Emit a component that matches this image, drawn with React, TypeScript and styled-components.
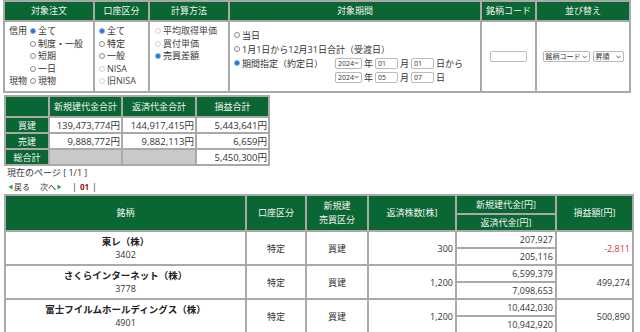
import React from "react";
import styled, { createGlobalStyle } from "styled-components";

const Global = createGlobalStyle`
  html, body { margin: 0; padding: 0; background: #fff; overflow: hidden; }
  body {
    font-family: "Open Sans", "Noto Sans CJK JP", sans-serif;
    font-size: 9px;
    color: #333;
  }
`;

const GREEN = "#0a6633";
const LINE = "#a9a9a9";

const Page = styled.div`
  display: flex;
  flex-direction: column;
  align-items: flex-start;
  padding-left: 3px;
  width: 640px;
  height: 332px;
  box-sizing: border-box;
`;

/* ---------- generic grid table ---------- */
const GridTable = styled.div<{ $cols: string; $rows: string; $shift?: number; $top?: number }>`
  display: grid;
  grid-template-columns: ${(p) => p.$cols};
  grid-template-rows: ${(p) => p.$rows};
  gap: 2px;
  border: 2px solid ${LINE};
  background: ${LINE};
  margin-left: ${(p) => p.$shift ?? 0}px;
  margin-top: ${(p) => p.$top ?? 0}px;
  flex: none;
`;

const HeadCell = styled.div<{ $span?: number }>`
  grid-row: span ${(p) => p.$span ?? 1};
  background: ${GREEN};
  color: #f2f2f2;
  display: flex;
  align-items: center;
  justify-content: center;
  text-align: center;
  font-size: 9px;
  line-height: 14px;
  white-space: nowrap;
`;

/* ---------- filter table ---------- */
const OptionCell = styled.div<{ $pad: number }>`
  background: #fff;
  padding: 3px 0 0 ${(p) => p.$pad}px;
  display: flex;
  flex-direction: column;
  line-height: 12.5px;
  white-space: nowrap;
`;

const CenterCell = styled.div`
  background: #fff;
  display: flex;
  align-items: center;
  justify-content: center;
  gap: 3px;
`;

const OrderGrid = styled.div`
  display: grid;
  grid-template-columns: 21px auto;
  grid-auto-rows: 12.5px;
  align-items: center;
`;

const PeriodCell = styled.div`
  background: #fff;
  padding-left: 4px;
  display: flex;
  flex-direction: column;
  justify-content: center;
  padding-bottom: 1px;
  white-space: nowrap;
`;

const PeriodRow = styled.div`
  height: 14px;
  display: flex;
  align-items: center;
`;

const RangeGrid = styled.div`
  display: grid;
  grid-template-columns: 101px auto;
  grid-auto-rows: 14px;
  align-items: center;
`;

const DateLine = styled.div`
  display: flex;
  align-items: center;
  gap: 1px;
`;

const Opt = styled.label<{ $disabled?: boolean }>`
  display: inline-flex;
  align-items: center;
  color: ${(p) => (p.$disabled ? "#444" : "#333")};
`;

const Radio = styled.span<{ $checked?: boolean; $disabled?: boolean }>`
  display: inline-block;
  flex: none;
  width: 6px;
  height: 6px;
  box-sizing: border-box;
  border-radius: 50%;
  margin-right: 2px;
  border: 1px solid
    ${(p) => (p.$checked ? "#7fb0ee" : p.$disabled ? "#d4d4d4" : "#8a8a8a")};
  background: ${(p) => (p.$checked ? "#1f74e0" : "#fff")};
`;

const FakeSelect = styled.span<{ $w: number }>`
  display: inline-flex;
  align-items: center;
  justify-content: space-between;
  width: ${(p) => p.$w}px;
  height: 11px;
  box-sizing: border-box;
  border: 1px solid #b8b8b8;
  border-radius: 2px;
  background: #fff;
  padding: 0 2px 0 2px;
  font-size: 7px;
  line-height: 9px;
  color: #333;
  flex: none;
`;

const TextBox = styled.input<{ $w: number }>`
  width: ${(p) => p.$w}px;
  height: 11px;
  box-sizing: border-box;
  border: 1px solid #bcbcbc;
  border-radius: 2px;
  padding: 0 2px;
  margin: 0;
  font-family: "Open Sans", sans-serif;
  font-size: 7px;
  color: #333;
  background: #fff;
  outline: none;
  flex: none;
`;

const Unit = styled.span`
  padding: 0 1px;
`;

const Chevron = () => (
  <svg width="5" height="4" viewBox="0 0 5 4">
    <path d="M0.6 1 L2.5 2.9 L4.4 1" fill="none" stroke="#444" strokeWidth="0.9" />
  </svg>
);

/* ---------- summary table ---------- */
const SideHead = styled.div`
  background: ${GREEN};
  color: #f2f2f2;
  display: flex;
  align-items: center;
  justify-content: center;
  font-size: 9px;
`;

const SumCell = styled.div<{ $blank?: boolean }>`
  background: ${(p) => (p.$blank ? "#c9c9c9" : "#fff")};
  display: flex;
  align-items: center;
  justify-content: flex-end;
  padding-right: 1px;
  font-size: 9.5px;
  white-space: nowrap;
`;

/* ---------- pager ---------- */
const Pager = styled.div`
  padding-left: 4px;
  height: 29px;
  display: flex;
  flex-direction: column;
  justify-content: center;
  line-height: 14px;
  font-size: 9px;
  color: #333;
`;

const NavRow = styled.div`
  display: flex;
  align-items: center;
  gap: 2px;
  padding-left: 1px;
`;

const NavLink = styled.span`
  display: inline-flex;
  align-items: center;
  gap: 1px;
  font-size: 8px;
  margin-right: 8px;
`;

const PageNo = styled.span`
  color: #8b1010;
  font-weight: bold;
  font-size: 8px;
  padding: 0 1px;
`;

const Tri = ({ dir }: { dir: "l" | "r" }) => (
  <svg width="5" height="6" viewBox="0 0 5 6">
    <path d={dir === "l" ? "M4.5 0.5 L0.5 3 L4.5 5.5Z" : "M0.5 0.5 L4.5 3 L0.5 5.5Z"} fill="#27a53a" />
  </svg>
);

/* ---------- result table ---------- */
const BodyCell = styled.div<{ $span?: number; $align?: string }>`
  grid-row: span ${(p) => p.$span ?? 1};
  background: #fff;
  display: flex;
  flex-direction: column;
  align-items: ${(p) => p.$align ?? "center"};
  justify-content: center;
  padding: 0 ${(p) => (p.$align === "flex-end" ? "2px" : "0")};
  font-size: 9px;
  line-height: 13px;
  white-space: nowrap;
`;

const Name = styled.span`
  font-weight: bold;
  font-size: 9.5px;
  color: #222;
`;

const Amount = styled.span<{ $neg?: boolean }>`
  color: ${(p) => (p.$neg ? "#d93a3a" : "#333")};
`;

type Row = {
  name: string;
  code: string;
  acct: string;
  side: string;
  qty: string;
  open: string;
  close: string;
  pl: string;
};

const rows: Row[] = [
  { name: "東レ（株）", code: "3402", acct: "特定", side: "買建", qty: "300", open: "207,927", close: "205,116", pl: "-2,811" },
  { name: "さくらインターネット（株）", code: "3778", acct: "特定", side: "買建", qty: "1,200", open: "6,599,379", close: "7,098,653", pl: "499,274" },
  { name: "富士フイルムホールディングス（株）", code: "4901", acct: "特定", side: "買建", qty: "1,200", open: "10,442,030", close: "10,942,920", pl: "500,890" },
];

const DateInputs = ({ m, d, tail }: { m: string; d: string; tail: string }) => (
  <DateLine>
    <FakeSelect $w={27}>
      2024
      <Chevron />
    </FakeSelect>
    <Unit>年</Unit>
    <TextBox $w={23} defaultValue={m} readOnly />
    <Unit>月</Unit>
    <TextBox $w={23} defaultValue={d} readOnly />
    <Unit>{tail}</Unit>
  </DateLine>
);

export default function App() {
  return (
    <>
      <Global />
      <Page>
        <GridTable $cols="88px 53px 78px 250px 53px 92px" $rows="18px 69px">
          <HeadCell>対象注文</HeadCell>
          <HeadCell>口座区分</HeadCell>
          <HeadCell>計算方法</HeadCell>
          <HeadCell>対象期間</HeadCell>
          <HeadCell>銘柄コード</HeadCell>
          <HeadCell>並び替え</HeadCell>

          <OptionCell $pad={4}>
            <OrderGrid>
              <span>信用</span>
              <Opt><Radio $checked />全て</Opt>
              <span />
              <Opt><Radio />制度・一般</Opt>
              <span />
              <Opt><Radio />短期</Opt>
              <span />
              <Opt><Radio />一日</Opt>
              <span>現物</span>
              <Opt><Radio />現物</Opt>
            </OrderGrid>
          </OptionCell>

          <OptionCell $pad={4}>
            <Opt><Radio $checked />全て</Opt>
            <Opt><Radio />特定</Opt>
            <Opt><Radio />一般</Opt>
            <Opt $disabled><Radio $disabled />NISA</Opt>
            <Opt $disabled><Radio $disabled />旧NISA</Opt>
          </OptionCell>

          <OptionCell $pad={5}>
            <Opt $disabled><Radio $disabled />平均取得単価</Opt>
            <Opt $disabled><Radio $disabled />買付単価</Opt>
            <Opt><Radio $checked />売買差額</Opt>
          </OptionCell>

          <PeriodCell>
            <PeriodRow>
              <Opt><Radio />当日</Opt>
            </PeriodRow>
            <PeriodRow>
              <Opt><Radio />1月1日から12月31日合計（受渡日）</Opt>
            </PeriodRow>
            <RangeGrid>
              <Opt><Radio $checked />期間指定（約定日）</Opt>
              <DateInputs m="01" d="01" tail="日から" />
              <span />
              <DateInputs m="05" d="07" tail="日" />
            </RangeGrid>
          </PeriodCell>

          <CenterCell>
            <TextBox $w={37} defaultValue="" readOnly />
          </CenterCell>

          <CenterCell>
            <FakeSelect $w={47}>
              銘柄コード
              <Chevron />
            </FakeSelect>
            <FakeSelect $w={31}>
              昇順
              <Chevron />
            </FakeSelect>
          </CenterCell>
        </GridTable>

        <GridTable $cols="42px 71px 72px 71px" $rows="19px 14px 14px 14px" $shift={1} $top={2}>
          <HeadCell />
          <HeadCell>新規建代金合計</HeadCell>
          <HeadCell>返済代金合計</HeadCell>
          <HeadCell>損益合計</HeadCell>

          <SideHead>買建</SideHead>
          <SumCell>139,473,774円</SumCell>
          <SumCell>144,917,415円</SumCell>
          <SumCell>5,443,641円</SumCell>

          <SideHead>売建</SideHead>
          <SumCell>9,888,772円</SumCell>
          <SumCell>9,882,113円</SumCell>
          <SumCell>6,659円</SumCell>

          <SideHead>総合計</SideHead>
          <SumCell $blank />
          <SumCell $blank />
          <SumCell>5,450,300円</SumCell>
        </GridTable>

        <Pager>
          <span>現在のページ [ 1/1 ]</span>
          <NavRow>
            <NavLink>
              <Tri dir="l" />
              戻る
            </NavLink>
            <NavLink>
              次へ
              <Tri dir="r" />
            </NavLink>
            <span>|</span>
            <PageNo>01</PageNo>
            <span>|</span>
          </NavRow>
        </Pager>

        <GridTable
          $cols="239px 58px 60px 86px 98px 75px"
          $rows="17px 15px repeat(6, 15px)"
          $shift={1}
        >
          <HeadCell $span={2}>銘柄</HeadCell>
          <HeadCell $span={2}>口座区分</HeadCell>
          <HeadCell $span={2}>
            新規建
            <br />
            売買区分
          </HeadCell>
          <HeadCell $span={2}>返済株数[株]</HeadCell>
          <HeadCell>新規建代金[円]</HeadCell>
          <HeadCell $span={2}>損益額[円]</HeadCell>
          <HeadCell>返済代金[円]</HeadCell>

          {rows.map((r) => (
            <React.Fragment key={r.code}>
              <BodyCell $span={2}>
                <Name>{r.name}</Name>
                <span>{r.code}</span>
              </BodyCell>
              <BodyCell $span={2}>{r.acct}</BodyCell>
              <BodyCell $span={2}>{r.side}</BodyCell>
              <BodyCell $span={2} $align="flex-end">{r.qty}</BodyCell>
              <BodyCell $align="flex-end">{r.open}</BodyCell>
              <BodyCell $span={2} $align="flex-end">
                <Amount $neg={r.pl.startsWith("-")}>{r.pl}</Amount>
              </BodyCell>
              <BodyCell $align="flex-end">{r.close}</BodyCell>
            </React.Fragment>
          ))}
        </GridTable>
      </Page>
    </>
  );
}
